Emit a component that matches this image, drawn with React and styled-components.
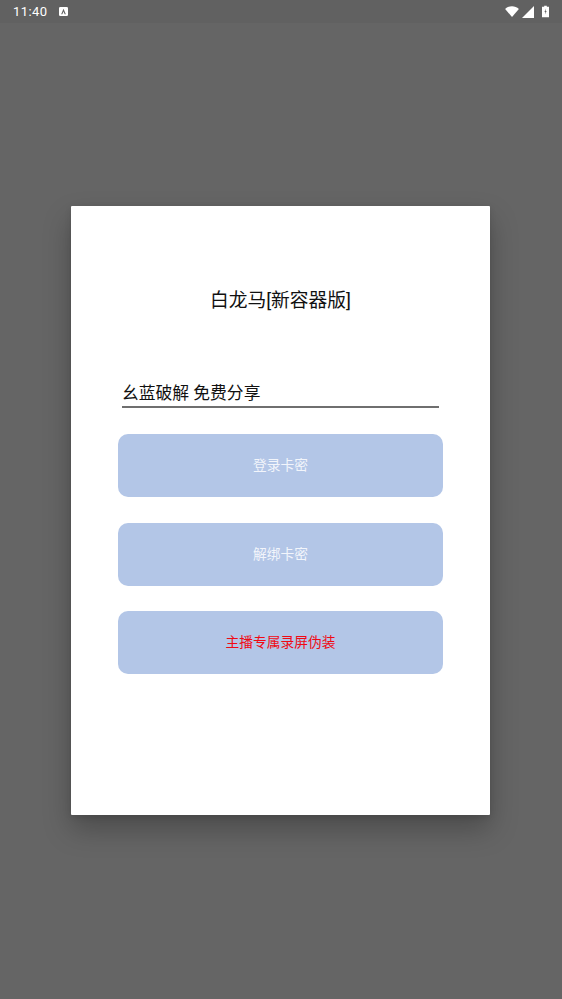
import styled, { createGlobalStyle } from "styled-components";

const GlobalStyle = createGlobalStyle`
  html, body {
    margin: 0;
    padding: 0;
    background: #656565;
    font-family: "Roboto", "Noto Sans CJK SC", sans-serif;
  }
`;

const Screen = styled.div`
  width: 562px;
  height: 999px;
  background: #656565;
  overflow: hidden;
`;

const StatusBar = styled.div`
  height: 23px;
  padding: 0 13px;
  display: flex;
  align-items: center;
  justify-content: space-between;
  background: #616161;
  color: #fff;
`;

const StatusLeft = styled.div`
  display: flex;
  align-items: center;
  gap: 12px;
`;

const Clock = styled.span`
  font-size: 13px;
  letter-spacing: 0.4px;
`;

const StatusRight = styled.div`
  display: flex;
  align-items: center;
  gap: 3px;
`;

const Body = styled.main`
  display: flex;
  justify-content: center;
  padding: 183px 1px 0 0;
`;

const Dialog = styled.section`
  width: 419px;
  height: 609px;
  box-sizing: border-box;
  padding-top: 82px;
  display: flex;
  flex-direction: column;
  align-items: center;
  background: #fff;
  border-radius: 1px;
  box-shadow: 0 14px 28px rgba(0, 0, 0, 0.26), 0 2px 6px rgba(0, 0, 0, 0.1);
`;

const Title = styled.h1`
  margin: 0;
  height: 26px;
  line-height: 26px;
  font-size: 18.75px;
  font-weight: 400;
  color: #111;
`;

const CodeInput = styled.input`
  width: 317px;
  height: 34px;
  box-sizing: border-box;
  margin-top: 60px;
  padding: 3px 0 0 0;
  border: 0;
  border-bottom: 2px solid #6f6f6f;
  outline: none;
  background: transparent;
  font-family: inherit;
  font-size: 16.8px;
  color: #111;
`;

const Actions = styled.div`
  margin-top: 26px;
  display: flex;
  flex-direction: column;
  gap: 25.5px;
`;

const ActionButton = styled.button`
  width: 325px;
  height: 63px;
  padding: 0 0 3px;
  border: 0;
  border-radius: 10px;
  background: #b3c6e7;
  font-family: inherit;
  font-size: 13.75px;
  color: ${(props) => (props.$danger ? "#f00a14" : "#f2f5fb")};
`;

function AppBadge() {
  return (
    <svg width="9" height="9" viewBox="0 0 10 10">
      <rect width="10" height="10" rx="1.5" fill="#fff" />
      <path d="M5 2 L7.6 8 H6.3 L5 5 L3.7 8 H2.4 Z" fill="#616161" />
    </svg>
  );
}

function Wifi() {
  return (
    <svg width="14" height="11" viewBox="0 0 15 12">
      <path d="M0 3.2 C4 -0.6 11 -0.6 15 3.2 L7.5 12 Z" fill="#fff" />
    </svg>
  );
}

function Signal() {
  return (
    <svg width="12" height="12" viewBox="0 0 12 12">
      <path d="M12 0 V12 H0 Z" fill="#fff" />
    </svg>
  );
}

function Battery() {
  return (
    <svg width="7" height="13" viewBox="0 0 8 13" style={{ marginLeft: 5 }}>
      <path d="M2.5 0 H5.5 V1 H8 V13 H0 V1 H2.5 Z" fill="#fff" />
      <path d="M4.6 3 L2.8 7 H3.9 L3.4 10 L5.3 6 H4.2 Z" fill="#616161" />
    </svg>
  );
}

export default function App() {
  return (
    <Screen>
      <GlobalStyle />
      <StatusBar>
        <StatusLeft>
          <Clock>11:40</Clock>
          <AppBadge />
        </StatusLeft>
        <StatusRight>
          <Wifi />
          <Signal />
          <Battery />
        </StatusRight>
      </StatusBar>
      <Body>
        <Dialog>
          <Title>白龙马[新容器版]</Title>
          <CodeInput defaultValue="幺蓝破解 免费分享" />
          <Actions>
            <ActionButton>登录卡密</ActionButton>
            <ActionButton>解绑卡密</ActionButton>
            <ActionButton $danger>主播专属录屏伪装</ActionButton>
          </Actions>
        </Dialog>
      </Body>
    </Screen>
  );
}
